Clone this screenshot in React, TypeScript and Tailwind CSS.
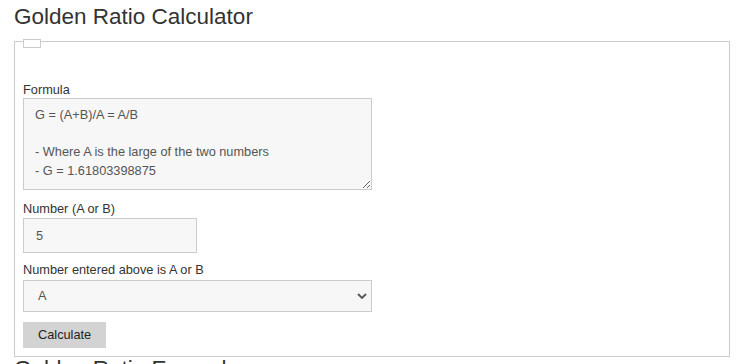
import React, { useState } from 'react';

const formula = `G = (A+B)/A = A/B

- Where A is the large of the two numbers
- G = 1.61803398875`;

export default function App() {
  const [num, setNum] = useState('5');
  const [which, setWhich] = useState('A');

  return (
    <div className="min-h-screen bg-white pl-[14px] pr-[11px] font-['Liberation_Sans',Arial,sans-serif] text-[#333]">
      <h1 className="pt-[4px] text-[22.5px] leading-[26px] font-normal text-[#333]">Golden Ratio Calculator</h1>

      {/* calculator box */}
      <div className="relative mt-[11px] border border-[#cccccc] px-[8px] pt-[39px] pb-[8px]">
        <div className="absolute left-[8px] top-[-3px] w-[18px] h-[9px] bg-white border border-[#cccccc]" />

        <label className="block text-[12.75px] leading-[17px]">Formula</label>
        <textarea
          readOnly
          value={formula}
          className="block w-[349px] h-[92px] bg-[#f7f7f7] border border-[#cccccc] pt-[7px] px-[11px] text-[12.75px] leading-[18.7px] text-[#555] outline-none"
        />

        <label className="block mt-[10px] text-[12.75px] leading-[17px]">Number (A or B)</label>
        <input
          type="text"
          value={num}
          onChange={e => setNum(e.target.value)}
          className="block mt-[1px] w-[174px] h-[35px] bg-[#f7f7f7] border border-[#cccccc] pl-[12px] text-[12.75px] text-[#555] outline-none"
        />

        <label className="block mt-[8px] text-[12.75px] leading-[17px]">Number entered above is A or B</label>
        <div className="relative mt-[2px] w-[349px]">
          <select
            value={which}
            onChange={e => setWhich(e.target.value)}
            className="block w-full h-[32px] appearance-none bg-[#f7f7f7] border border-[#cccccc] pl-[14px] text-[12.75px] text-[#555] outline-none"
          >
            <option value="A">A</option>
            <option value="B">B</option>
          </select>
          <svg className="absolute right-[5px] top-[13px] pointer-events-none" width="10" height="6" viewBox="0 0 10 6">
            <polyline points="1,1 5,5 9,1" fill="none" stroke="#555" strokeWidth="1.8" />
          </svg>
        </div>

        <button className="block mt-[10px] h-[26px] px-[15px] bg-[#d3d3d3] text-[12.75px] text-[#222]">
          Calculate
        </button>
      </div>

      <h2 className="text-[22.5px] leading-[24px] font-normal text-[#333]">Golden Ratio Examples</h2>
    </div>
  );
}
